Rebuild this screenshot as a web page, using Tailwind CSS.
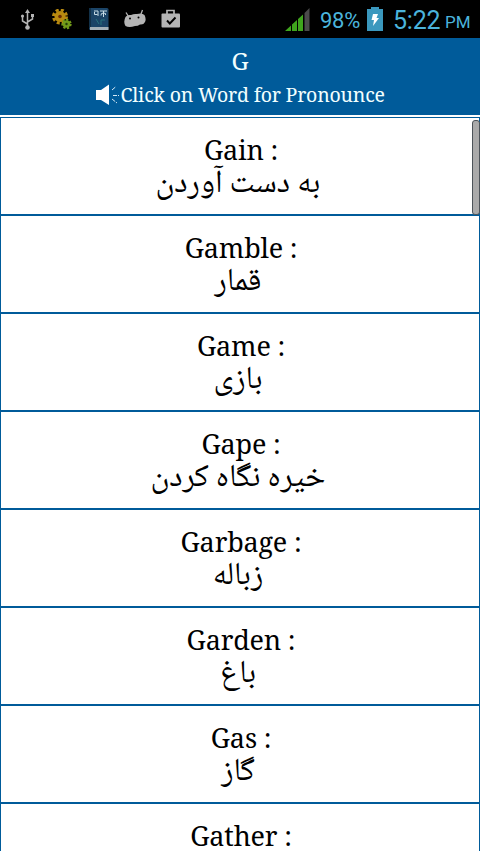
<!DOCTYPE html>
<html lang="en">
<head>
  <meta charset="UTF-8" />
  <meta name="viewport" content="width=device-width, initial-scale=1.0" />
  <title>Dictionary - G</title>
  <script src="https://cdn.jsdelivr.net/npm/@tailwindcss/browser@4"></script>
</head>

<body class="h-[854px] overflow-hidden bg-white font-['Noto_Serif','Droid_Serif','DejaVu_Serif_Condensed','DejaVu_Serif',serif]">
  <!-- Status bar -->
  <div class="h-[38px] bg-black flex items-center justify-between pl-[20px] pr-[10px]">
    <div class="flex items-center">
      <svg class="w-[15px] h-[21px]" viewBox="0 0 15 21" fill="none" stroke="#b4b4b4" stroke-width="1.5">
        <path d="M7.500 3V18M7.500 15L2.500 12V7M7.500 13L12.500 10V6" />
        <path d="M5 4L7.500 0L10 4Z M11 5h3v3h-3z" fill="#b4b4b4" stroke="none" />
        <circle cx="2.500" cy="7" r="1.600" fill="#b4b4b4" stroke="none" />
        <circle cx="7.500" cy="18.500" r="2.300" fill="#b4b4b4" stroke="none" />
      </svg>
      <svg class="w-[20px] h-[21px] ml-[17px]" viewBox="0 0 20 21">
        <circle cx="8" cy="7.500" r="5.500" fill="#b98a10" />
        <circle cx="8" cy="7.500" r="6.500" fill="none" stroke="#b98a10" stroke-width="3" stroke-dasharray="3 2.105" />
        <circle cx="8" cy="7.500" r="1.800" fill="#6b2c05" />
        <circle cx="14.500" cy="15" r="3.800" fill="#719a1a" />
        <circle cx="14.500" cy="15" r="4.200" fill="none" stroke="#719a1a" stroke-width="2" stroke-dasharray="2.200 1.570" />
        <circle cx="14.500" cy="15" r="1.200" fill="#233d07" />
      </svg>
      <svg class="w-[20px] h-[22px] ml-[17px]" viewBox="0 0 20 22">
        <rect width="19.500" height="22" rx="1.500" fill="#1b4467" />
        <path d="M0 0H2V20H0z" fill="#123149" />
        <path d="M1 19H19.500V22H1z" fill="#a5b1b8" />
        <path d="M5 3h4M9 3v5M5.500 4v2.500h3M11 3h7M14.500 3v6M14.500 5q-3 0-2.500 2.500M14.500 5q3 0 2 2" stroke="#c6dbe6" fill="none" />
        <path d="M7 11l3 5M12 12h4M12 12v5" stroke="#27737d" fill="none" />
      </svg>
      <svg class="w-[22px] h-[20px] ml-[15px]" viewBox="0 0 22 20">
        <path d="M2 3.500L4.500 7.500M18.500 1L17 5" stroke="#b4b4b4" stroke-width="1.300" />
        <path d="M1.500 8Q3 5.500 7 6Q10 4.500 13 5Q18 3.500 20.500 6Q22.500 10 21 13Q19.500 16 16 15.500Q14 17 11 17Q5 19 1.500 17Q-1 13 1.500 8Z" fill="#b4b4b4" />
        <circle cx="6" cy="9.500" r="1" fill="#000" />
        <circle cx="14.500" cy="8.500" r="1" fill="#000" />
      </svg>
      <svg class="w-[20px] h-[20px] ml-[15px]" viewBox="0 0 20 20">
        <path d="M6 5V1.500H13V5" stroke="#b4b4b4" stroke-width="1.700" fill="none" />
        <rect x=".5" y="4.500" width="18.500" height="14" rx="1" fill="#b4b4b4" />
        <path d="M6 11.500L8.800 14.500L14.500 8.500" stroke="#000" stroke-width="1.900" fill="none" />
      </svg>
    </div>
    <div class="flex items-center font-[Roboto,sans-serif] text-[#4bb4dc]">
      <svg class="w-[25px] h-[23px]" viewBox="0 0 25 23">
        <path d="M0 23L6 17.500V23zM7 16.500L12 12V23H7zM13 11L18 6.500V23H13z" fill="#3fa51d" />
        <path d="M19.500 5L24.500 0V23H19.500z" fill="#4b4b4b" />
      </svg>
      <span class="ml-[10px] w-[40px] text-[22px] leading-[38px] pt-[3px] tracking-[-0.3px] whitespace-nowrap">98%</span>
      <svg class="w-[16px] h-[24px] ml-[7px]" viewBox="0 0 16 24">
        <path d="M4 0H12V2H16V24H0V2H4z" fill="#3b98be" />
        <path d="M6 7H11L9.500 11H12L6 19L7 13H4.500z" fill="#fff" />
      </svg>
      <span class="ml-[10px] w-[47px] text-[25px] leading-[38px] pt-[3px] tracking-[-0.2px] whitespace-nowrap">5:22</span>
      <span class="ml-[5px] w-[25px] text-[17px] leading-[38px] pt-[6px] whitespace-nowrap">PM</span>
    </div>
  </div>

  <!-- Header -->
  <header class="h-[77px] bg-[#005b9a] text-[#f2ffff] text-center pt-[9px]">
    <h1 class="text-[24px] leading-[28px]">G</h1>
    <div class="flex items-center justify-center h-[40px]">
      <svg class="w-[25px] h-[24px]" viewBox="0 0 25 24">
        <path d="M0 7H5L13 1.500V22L5 17H0z" fill="#fff" />
        <path d="M16 7L20 3.500M17 12.500H23M16 16L21 20" stroke="#d5e9f5" stroke-width="1" stroke-dasharray="4 1" />
      </svg>
      <p class="w-[264px] text-left text-[19.5px] leading-[28px] tracking-[-0.2px] whitespace-nowrap">Click on Word for Pronounce</p>
    </div>
  </header>

  <!-- Word list -->
  <main class="relative mt-[2px] h-[734px] overflow-hidden">
    <ul id="words" class="text-black text-center"></ul>
    <div class="absolute right-0 top-[3px] w-[8px] h-[95px] rounded-[3px] border border-[#4c5359] bg-[#aaa]"></div>
  </main>

  <script>
    const words = [
      ['Gain', 'به دست آوردن'],
      ['Gamble', 'قمار'],
      ['Game', 'بازی'],
      ['Gape', 'خیره نگاه کردن'],
      ['Garbage', 'زباله'],
      ['Garden', 'باغ'],
      ['Gas', 'گاز'],
      ['Gather', ''],
    ];

    document.getElementById('words').innerHTML = words.map(([word, meaning]) => `
      <li class="h-[98px] border border-[#005b9a] pt-[13px]">
        <p class="text-[27px] leading-[38px] tracking-[-0.2px] pl-[2px]">${word} :</p>
        <p class="text-[32px] leading-[32px] pr-[4px] font-['Noto_Naskh_Arabic','Noto_Sans_Arabic','DejaVu_Sans',sans-serif]" dir="rtl" lang="fa">${meaning}</p>
      </li>`).join('');
  </script>
</body>
</html>
